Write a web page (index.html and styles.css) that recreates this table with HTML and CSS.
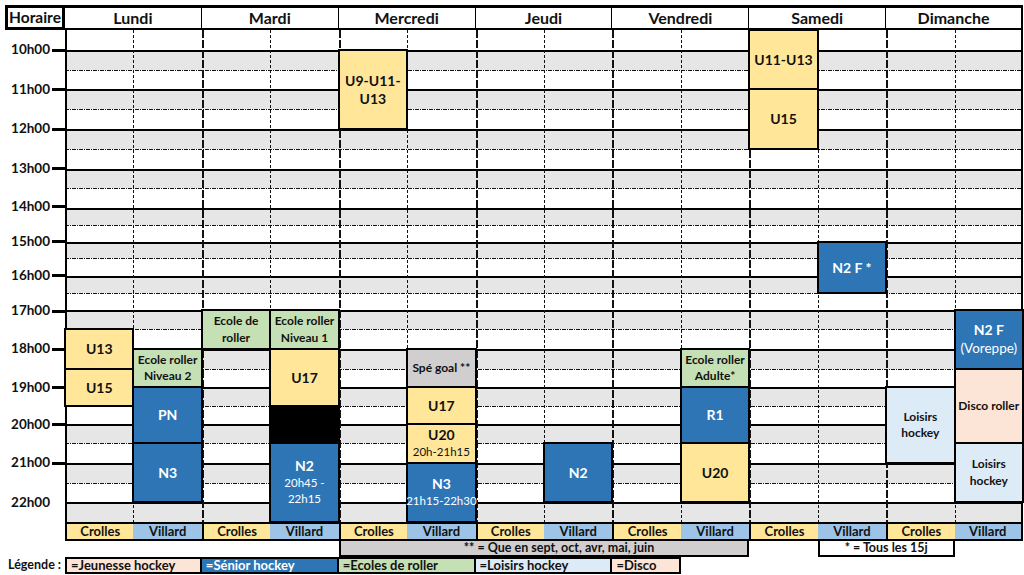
FILE: index.html
```html
<!DOCTYPE html>
<html lang="fr">
<head>
<meta charset="utf-8">
<title>Planning</title>
<link rel="stylesheet" href="styles.css">
</head>
<body>
<div class="page">
  <div class="head">
    <div class="horaire">Horaire</div>
    <div class="day">Lundi</div>
    <div class="day">Mardi</div>
    <div class="day">Mercredi</div>
    <div class="day">Jeudi</div>
    <div class="day">Vendredi</div>
    <div class="day">Samedi</div>
    <div class="day">Dimanche</div>
  </div>

  <div class="main">
    <div class="times">
      <div>10h00</div><div>11h00</div><div>12h00</div><div>13h00</div><div>14h00</div>
      <div>15h00</div><div>16h00</div><div>17h00</div><div>18h00</div><div>19h00</div>
      <div>20h00</div><div>21h00</div><div>22h00</div>
    </div>

    <div class="board">
      <div class="stripes">
        <div class="f"></div>
        <div class="h"></div><div class="s"></div>
        <div class="h"></div><div class="s"></div>
        <div class="h"></div><div class="s"></div>
        <div class="h"></div><div class="s"></div>
        <div class="h"></div><div class="s"></div>
        <div class="h"></div><div class="s"></div>
        <div class="h"></div><div class="s"></div>
        <div class="h"></div><div class="s"></div>
        <div class="h"></div><div class="s"></div>
        <div class="h"></div><div class="s"></div>
        <div class="h"></div><div class="s"></div>
        <div class="h"></div><div class="s"></div>
        <div class="h"></div>
      </div>
      <div class="vlines">
        <div></div><div></div><div></div><div></div><div></div><div></div><div></div>
        <div></div><div></div><div></div><div></div><div></div><div></div><div></div>
      </div>

      <!-- Lundi -->
      <div class="ev yel c1 s17 n2">U13</div>
      <div class="ev yel c1 s19 n2">U15</div>
      <div class="ev grn c2 s18 n2 sm">Ecole roller<br>Niveau 2</div>
      <div class="ev blu c2 s20 n3">PN</div>
      <div class="ev blu c2 s23 n3">N3</div>
      <!-- Mardi -->
      <div class="ev grn c3 s16 n2 sm">Ecole de<br>roller</div>
      <div class="ev grn c4 s16 n2 sm">Ecole roller<br>Niveau 1</div>
      <div class="ev yel c4 s18 n3">U17</div>
      <div class="ev blk c4 s21 n2"></div>
      <div class="ev blu c4 s23 n4">N2<small>20h45 -</small><small>22h15</small></div>
      <!-- Mercredi -->
      <div class="ev yel c5 s2 n4">U9-U11-<br>U13</div>
      <div class="ev gry c6 s18 n2 sm">Spé goal **</div>
      <div class="ev yel c6 s20 n2">U17</div>
      <div class="ev yel c6 s22 n2">U20<small>20h-21h15</small></div>
      <div class="ev blu c6 s24 n3">N3<small>21h15-22h30</small></div>
      <!-- Jeudi -->
      <div class="ev blu c8 s23 n3">N2</div>
      <!-- Vendredi -->
      <div class="ev grn c10 s18 n2 sm">Ecole roller<br>Adulte*</div>
      <div class="ev blu c10 s20 n3">R1</div>
      <div class="ev yel c10 s23 n3">U20</div>
      <!-- Samedi -->
      <div class="ev yel c11 s1 n3">U11-U13</div>
      <div class="ev yel c11 s4 n3">U15</div>
      <div class="ev blu c12 s12 n3">N2 F *</div>
      <!-- Dimanche -->
      <div class="ev lsr c13 s20 n4 sm">Loisirs<br>hockey</div>
      <div class="ev blu c14 s16 n3">N2 F<span class="big">(Voreppe)</span></div>
      <div class="ev dsc c14 s19 n4 sm">Disco roller</div>
      <div class="ev lsr c14 s23 n3 sm">Loisirs<br>hockey</div>
    </div>
  </div>

  <div class="labels">
    <div></div>
    <div class="cro">Crolles</div><div class="vil">Villard</div>
    <div class="cro">Crolles</div><div class="vil">Villard</div>
    <div class="cro">Crolles</div><div class="vil">Villard</div>
    <div class="cro">Crolles</div><div class="vil">Villard</div>
    <div class="cro">Crolles</div><div class="vil">Villard</div>
    <div class="cro">Crolles</div><div class="vil">Villard</div>
    <div class="cro">Crolles</div><div class="vil">Villard</div>
  </div>

  <div class="notes">
    <div class="goal-note">** = Que en sept, oct, avr, mai, juin</div>
    <div class="star-note">* = Tous les 15j</div>
  </div>

  <div class="legend">
    <div class="lg-title">Légende :</div>
    <div class="lg dsc l-jeu">=Jeunesse hockey</div>
    <div class="lg blu l-sen">=Sénior hockey</div>
    <div class="lg grn l-eco">=Ecoles de roller</div>
    <div class="lg lsr l-loi">=Loisirs hockey</div>
    <div class="lg dsc l-dis">=Disco</div>
  </div>
</div>
</body>
</html>
```

FILE: styles.css
```css
* { box-sizing: border-box; }

body {
  margin: 0;
  background: #fff;
  font-family: Lato, "Liberation Sans", sans-serif;
  font-weight: 700;
  color: #111;
}

.page {
  width: 1023px;
  padding: 5px 0 0 5px;
}

/* ---------- header ---------- */
.head {
  display: grid;
  grid-template-columns: 60px repeat(7, minmax(0, 1fr));
  grid-template-rows: 25px;
}
.horaire,
.day {
  display: flex;
  align-items: center;
  justify-content: center;
  font-size: 15.5px;
  line-height: 1;
}
.horaire { border: 3px solid #000; }
.day {
  font-size: 16px;
  border-top: 3px solid #000;
  border-bottom: 2px solid #000;
  border-right: 1px solid #000;
}
.day:last-child { border-right: 2px solid #000; }

/* ---------- main grid ---------- */
.main {
  --rows: 20px 20px 19px 20px 20px 20px 20px 19px 20px 17px 17px 16px 18px 17px 17px 19px 20px 20px 18px 19px 18px 19px 20px 20px 19px 20px;
  display: grid;
  grid-template-columns: 60px minmax(0, 1fr);
}

.times {
  display: grid;
  grid-template-rows: var(--rows);
}
.times > div {
  grid-row: span 2;
  display: flex;
  align-items: center;
  justify-content: flex-end;
  gap: 2px;
  font-size: 13.5px;
  line-height: 1;
}
.times > div::after {
  content: "";
  width: 13px;
  height: 3px;
  background: #000;
}
.times > div:last-child::after { background: transparent; }

.board {
  display: grid;
  grid-template-columns: repeat(14, minmax(0, 1fr));
  grid-template-rows: var(--rows);
}
.stripes,
.vlines {
  grid-area: 1 / 1 / -1 / -1;
  display: grid;
}
.stripes { grid-template-rows: var(--rows); }
.stripes > .f { background: #fff; }
.stripes > .h {
  background: linear-gradient(#000, #000) left top / 100% 2px no-repeat, #e7e6e6;
}
.stripes > .s {
  background: repeating-linear-gradient(90deg, #111 0 4px, transparent 4px 5px, #111 5px 6px, transparent 6px 7px) left top / 100% 1px no-repeat, #fff;
}

.vlines { grid-template-columns: repeat(14, minmax(0, 1fr)); }
.vlines > div:nth-child(even) {
  background: repeating-linear-gradient(180deg, #111 0 3px, transparent 3px 5px) left top / 1px 100% no-repeat;
}
.vlines > div:nth-child(odd) {
  background: repeating-linear-gradient(180deg, #111 0 8px, transparent 8px 10px) left top / 2px 100% no-repeat;
}
.vlines > div:first-child {
  background: none;
  border-left: 2px solid #000;
}
.vlines > div:last-child { border-right: 2px solid #000; }

/* ---------- events ---------- */
.ev {
  margin: -1px;
  border: 2px solid #000;
  display: flex;
  flex-direction: column;
  align-items: center;
  justify-content: center;
  text-align: center;
  font-size: 14px;
  line-height: 1.25;
  min-width: 0;
  overflow: visible;
}
.ev.sm { font-size: 12px; line-height: 1.35; white-space: nowrap; }
.ev small {
  font-size: 11.5px;
  font-weight: 400;
  line-height: 1.45;
  white-space: nowrap;
}
.ev .big {
  font-size: 13.5px;
  font-weight: 400;
  line-height: 1.5;
}

.yel { background: #ffe699; }
.blu { background: #2e75b6; color: #fff; }
.grn { background: #c5e0b4; }
.lsr { background: #ddebf7; }
.dsc { background: #fce4d6; }
.gry { background: #d0cece; }
.blk { background: #000; }

.c1 { grid-column: 1; }
.c2 { grid-column: 2; }
.c3 { grid-column: 3; }
.c4 { grid-column: 4; }
.c5 { grid-column: 5; }
.c6 { grid-column: 6; }
.c8 { grid-column: 8; }
.c10 { grid-column: 10; }
.c11 { grid-column: 11; }
.c12 { grid-column: 12; }
.c13 { grid-column: 13; }
.c14 { grid-column: 14; }

.s1 { grid-row-start: 1; }
.s2 { grid-row-start: 2; }
.s4 { grid-row-start: 4; }
.s12 { grid-row-start: 12; }
.s16 { grid-row-start: 16; }
.s17 { grid-row-start: 17; }
.s18 { grid-row-start: 18; }
.s19 { grid-row-start: 19; }
.s20 { grid-row-start: 20; }
.s21 { grid-row-start: 21; }
.s22 { grid-row-start: 22; }
.s23 { grid-row-start: 23; }
.s24 { grid-row-start: 24; }

.n2 { grid-row-end: span 2; }
.n3 { grid-row-end: span 3; }
.n4 { grid-row-end: span 4; }

/* ---------- site labels ---------- */
.labels {
  display: grid;
  grid-template-columns: 60px repeat(14, minmax(0, 1fr));
  grid-template-rows: 19px;
}
.labels > .cro,
.labels > .vil {
  border-top: 2px solid #000;
  border-bottom: 2px solid #000;
  display: flex;
  align-items: center;
  justify-content: center;
  font-size: 13px;
  line-height: 1;
}
.labels > .cro { background: #ffe699; border-left: 2px solid #000; }
.labels > .vil { background: #9dc3e6; }
.labels > div:last-child { border-right: 2px solid #000; }

/* ---------- notes ---------- */
.notes {
  display: grid;
  grid-template-columns: 60px repeat(14, minmax(0, 1fr));
  grid-template-rows: 16px;
}
.goal-note,
.star-note {
  border: 2px solid #000;
  border-top: none;
  display: flex;
  align-items: center;
  justify-content: center;
  font-size: 12.5px;
  line-height: 1;
}
.goal-note {
  grid-column: 6 / 12;
  background: #d0cece;
  padding-left: 30px;
}
.star-note {
  grid-column: 13 / 15;
  background: #fff;
}

/* ---------- legend ---------- */
.legend {
  display: grid;
  grid-template-columns: 60px repeat(14, minmax(0, 1fr));
  grid-template-rows: 17px;
}
.lg-title {
  display: flex;
  align-items: center;
  padding-left: 3px;
  font-size: 12.5px;
  line-height: 1;
}
.lg {
  border: 2px solid #000;
  border-left: none;
  display: flex;
  align-items: center;
  padding-left: 4px;
  font-size: 13px;
  line-height: 1;
}
.l-jeu { grid-column: 2 / 4; border-left: 2px solid #000; }
.l-sen { grid-column: 4 / 6; }
.l-eco { grid-column: 6 / 8; }
.l-loi { grid-column: 8 / 10; }
.l-dis { grid-column: 10 / 11; }
```
